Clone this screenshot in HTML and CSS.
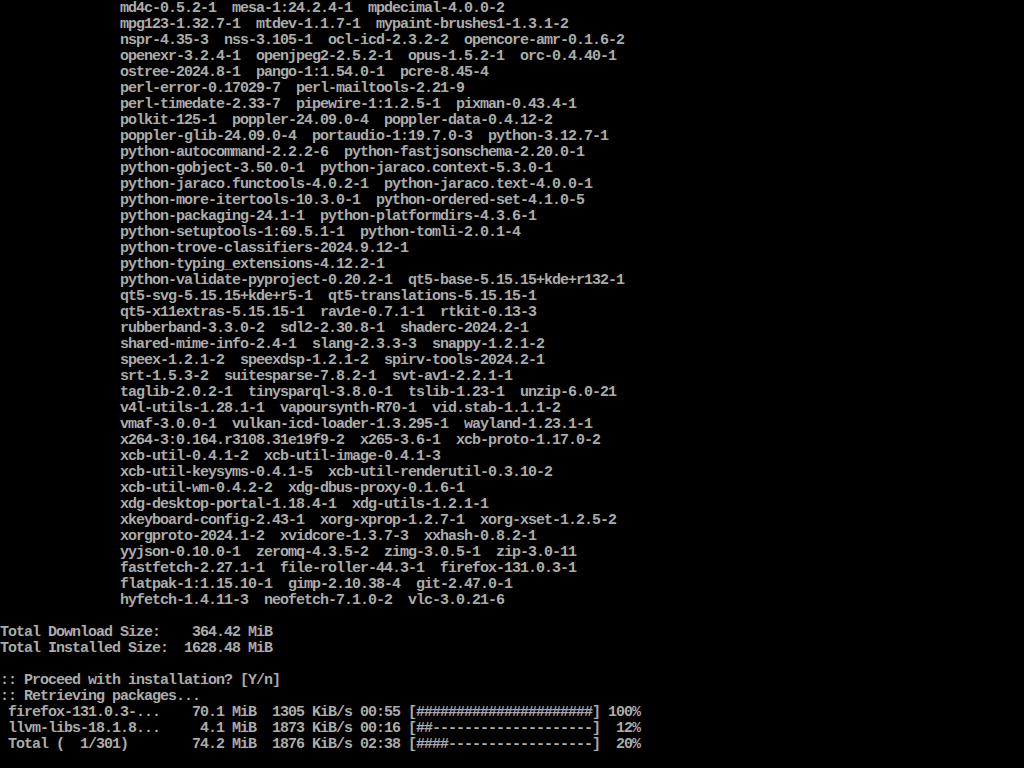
FILE: index.html
```html
<!DOCTYPE html>
<html lang="en">
<head>
    <meta charset="UTF-8">
    <meta name="viewport" content="width=device-width, initial-scale=1.0">
    <title>tty1</title>
    <link rel="stylesheet" href="styles.css">
</head>
<body>
<pre class="console">               md4c-0.5.2-1  mesa-1:24.2.4-1  mpdecimal-4.0.0-2
               mpg123-1.32.7-1  mtdev-1.1.7-1  mypaint-brushes1-1.3.1-2
               nspr-4.35-3  nss-3.105-1  ocl-icd-2.3.2-2  opencore-amr-0.1.6-2
               openexr-3.2.4-1  openjpeg2-2.5.2-1  opus-1.5.2-1  orc-0.4.40-1
               ostree-2024.8-1  pango-1:1.54.0-1  pcre-8.45-4
               perl-error-0.17029-7  perl-mailtools-2.21-9
               perl-timedate-2.33-7  pipewire-1:1.2.5-1  pixman-0.43.4-1
               polkit-125-1  poppler-24.09.0-4  poppler-data-0.4.12-2
               poppler-glib-24.09.0-4  portaudio-1:19.7.0-3  python-3.12.7-1
               python-autocommand-2.2.2-6  python-fastjsonschema-2.20.0-1
               python-gobject-3.50.0-1  python-jaraco.context-5.3.0-1
               python-jaraco.functools-4.0.2-1  python-jaraco.text-4.0.0-1
               python-more-itertools-10.3.0-1  python-ordered-set-4.1.0-5
               python-packaging-24.1-1  python-platformdirs-4.3.6-1
               python-setuptools-1:69.5.1-1  python-tomli-2.0.1-4
               python-trove-classifiers-2024.9.12-1
               python-typing_extensions-4.12.2-1
               python-validate-pyproject-0.20.2-1  qt5-base-5.15.15+kde+r132-1
               qt5-svg-5.15.15+kde+r5-1  qt5-translations-5.15.15-1
               qt5-x11extras-5.15.15-1  rav1e-0.7.1-1  rtkit-0.13-3
               rubberband-3.3.0-2  sdl2-2.30.8-1  shaderc-2024.2-1
               shared-mime-info-2.4-1  slang-2.3.3-3  snappy-1.2.1-2
               speex-1.2.1-2  speexdsp-1.2.1-2  spirv-tools-2024.2-1
               srt-1.5.3-2  suitesparse-7.8.2-1  svt-av1-2.2.1-1
               taglib-2.0.2-1  tinysparql-3.8.0-1  tslib-1.23-1  unzip-6.0-21
               v4l-utils-1.28.1-1  vapoursynth-R70-1  vid.stab-1.1.1-2
               vmaf-3.0.0-1  vulkan-icd-loader-1.3.295-1  wayland-1.23.1-1
               x264-3:0.164.r3108.31e19f9-2  x265-3.6-1  xcb-proto-1.17.0-2
               xcb-util-0.4.1-2  xcb-util-image-0.4.1-3
               xcb-util-keysyms-0.4.1-5  xcb-util-renderutil-0.3.10-2
               xcb-util-wm-0.4.2-2  xdg-dbus-proxy-0.1.6-1
               xdg-desktop-portal-1.18.4-1  xdg-utils-1.2.1-1
               xkeyboard-config-2.43-1  xorg-xprop-1.2.7-1  xorg-xset-1.2.5-2
               xorgproto-2024.1-2  xvidcore-1.3.7-3  xxhash-0.8.2-1
               yyjson-0.10.0-1  zeromq-4.3.5-2  zimg-3.0.5-1  zip-3.0-11
               fastfetch-2.27.1-1  file-roller-44.3-1  firefox-131.0.3-1
               flatpak-1:1.15.10-1  gimp-2.10.38-4  git-2.47.0-1
               hyfetch-1.4.11-3  neofetch-7.1.0-2  vlc-3.0.21-6

Total Download Size:    364.42 MiB
Total Installed Size:  1628.48 MiB

:: Proceed with installation? [Y/n]
:: Retrieving packages...
 firefox-131.0.3-...    70.1 MiB  1305 KiB/s 00:55 [######################] 100%
 llvm-libs-18.1.8...     4.1 MiB  1873 KiB/s 00:16 [##--------------------]  12%
 Total (  1/301)        74.2 MiB  1876 KiB/s 02:38 [####------------------]  20%
</pre>
</body>
</html>
```

FILE: styles.css
```css
html, body {
    margin: 0;
    padding: 0;
    background: #000;
}
body {
    width: 1024px;
    height: 768px;
    overflow: hidden;
}
.console {
    margin: 0;
    padding: 1px 0 0 0;
    font-family: "Liberation Mono", "DejaVu Sans Mono", monospace;
    font-size: 15px;
    font-weight: bold;
    letter-spacing: -1px;
    line-height: 16px;
    color: #ababab;
    white-space: pre;
}
```
